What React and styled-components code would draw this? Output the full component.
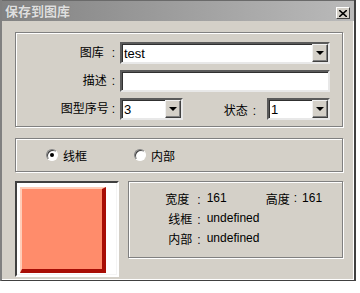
import React from "react"
import styled, { createGlobalStyle } from "styled-components"

const GlobalStyle = createGlobalStyle`
  body {
    margin: 0;
    background: #fff;
    font-family: "Liberation Sans", "Noto Sans CJK SC", sans-serif;
    font-size: 12px;
    color: #000;
  }
`

export default function App() {
  return (
    <>
      <GlobalStyle />
      <Window>
        <TitleBar>
          <Title>保存到图库</Title>
          <CloseButton>
            <svg width="8" height="7" viewBox="0 0 8 7">
              <path d="M0 0 L8 7 M8 0 L0 7" stroke="#000" strokeWidth="1.6" />
            </svg>
          </CloseButton>
        </TitleBar>
        <Content>
          <FormGroup>
            <Row>
              <Label>
                图库<Colon $gap={8}>:</Colon>
              </Label>
              <Select $width={210}>
                <Value $size={13}>test</Value>
                <DropButton>
                  <Arrow />
                </DropButton>
              </Select>
            </Row>
            <Row>
              <Label>
                描述<Colon $gap={5}>:</Colon>
              </Label>
              <Select $width={210} />
            </Row>
            <Row>
              <Label>
                图型序号<Colon $gap={3}>:</Colon>
              </Label>
              <Select $width={63}>
                <Value $size={13}>3</Value>
                <DropButton>
                  <Arrow />
                </DropButton>
              </Select>
              <SideLabel>
                状态<Colon $gap={5}>:</Colon>
              </SideLabel>
              <Select $width={63}>
                <Value $size={13}>1</Value>
                <DropButton>
                  <Arrow />
                </DropButton>
              </Select>
            </Row>
          </FormGroup>
          <RadioGroup>
            <RadioItem>
              <Radio $checked />
              线框
            </RadioItem>
            <RadioItem>
              <Radio />
              内部
            </RadioItem>
          </RadioGroup>
          <Bottom>
            <Preview>
              <Swatch />
            </Preview>
            <Info>
              <InfoRow>
                <InfoLabel>
                  宽度<Colon $gap={8} $after={6}>:</Colon>
                </InfoLabel>
                <InfoValue $width={59}>161</InfoValue>
                <span>高度</span>
                <Colon $gap={4} $after={5}>:</Colon>
                <InfoValue>161</InfoValue>
              </InfoRow>
              <InfoRow>
                <InfoLabel>
                  线框<Colon $gap={5} $after={6}>:</Colon>
                </InfoLabel>
                <InfoValue>undefined</InfoValue>
              </InfoRow>
              <InfoRow>
                <InfoLabel>
                  内部<Colon $gap={5} $after={6}>:</Colon>
                </InfoLabel>
                <InfoValue>undefined</InfoValue>
              </InfoRow>
            </Info>
          </Bottom>
        </Content>
      </Window>
    </>
  )
}

const Window = styled.div`
  width: 356px;
  height: 281px;
  box-sizing: border-box;
  background: #d4d0c8;
  border-left: 2px solid #808080;
  border-right: 2px solid #404040;
  border-bottom: 1px solid #404040;
  box-shadow: inset -1px -1px 0 #fff;
  display: flex;
  flex-direction: column;
`

const TitleBar = styled.div`
  height: 21px;
  box-sizing: border-box;
  padding: 6px 3px 0 3px;
  display: flex;
  justify-content: space-between;
  align-items: flex-start;
  background: linear-gradient(to right, #828282, #bababa);
  border-top: 1px solid #6a6a6a;
`

const Title = styled.div`
  font-size: 13px;
  font-weight: bold;
  line-height: 13px;
  margin-top: -2px;
  color: #dedede;
  text-shadow: 0 0 1px #6a6a6a;
`

const CloseButton = styled.div`
  width: 14px;
  height: 12px;
  margin-right: 1px;
  box-sizing: border-box;
  background: #d4d0c8;
  border: 1px solid;
  border-color: #fff #404040 #404040 #fff;
  display: flex;
  align-items: center;
  justify-content: center;
`

const Content = styled.div`
  padding: 11px 11px 0 13px;
  display: flex;
  flex-direction: column;
`

const Etched = styled.div`
  border: 1px solid #808080;
  box-shadow: inset 1px 1px 0 #fff, 1px 1px 0 #fff;
`

const FormGroup = styled(Etched)`
  padding: 9px 12px 6px 0;
  display: grid;
  row-gap: 6px;
`

const Row = styled.div`
  display: flex;
  align-items: center;
  height: 22px;
`

const Label = styled.div`
  width: 101px;
  margin-right: 3px;
  box-sizing: border-box;
  text-align: right;
  white-space: nowrap;
  line-height: 14px;
`

const Colon = styled.span`
  margin-left: ${p => (p.$gap ? p.$gap : 4)}px;
  margin-right: ${p => (p.$after ? p.$after : 2)}px;
`

const SideLabel = styled.div`
  margin-left: auto;
  margin-right: 9px;
  white-space: nowrap;
`

const Select = styled.div`
  width: ${p => p.$width}px;
  height: 22px;
  box-sizing: border-box;
  background: #fff;
  border: 2px solid;
  border-color: #5a5a5a #e8e8e8 #e8e8e8 #5a5a5a;
  box-shadow: inset 1px 1px 0 #303030;
  display: flex;
  align-items: center;
  padding-left: 2px;
`

const Value = styled.span`
  flex: 1;
  font-size: ${p => p.$size}px;
`

const DropButton = styled.div`
  width: 16px;
  height: 18px;
  box-sizing: border-box;
  background: #d4d0c8;
  border: 1px solid;
  border-color: #f0f0f0 #404040 #404040 #f0f0f0;
  box-shadow: inset -1px -1px 0 #808080;
  display: flex;
  align-items: center;
  justify-content: center;
`

const Arrow = styled.div`
  width: 0;
  height: 0;
  border-left: 4px solid transparent;
  border-right: 4px solid transparent;
  border-top: 4px solid #000;
`

const RadioGroup = styled(Etched)`
  margin-top: 11px;
  height: 34px;
  box-sizing: border-box;
  padding-left: 30px;
  display: flex;
  align-items: center;
  gap: 47px;
`

const RadioItem = styled.div`
  display: flex;
  align-items: center;
  gap: 5px;
`

const Radio = styled.div`
  width: 12px;
  height: 12px;
  box-sizing: border-box;
  border-radius: 50%;
  background: #fff;
  border: 1px solid;
  border-color: #808080 #fff #fff #808080;
  box-shadow: inset 1px 1px 0 #404040;
  display: flex;
  align-items: center;
  justify-content: center;

  &::after {
    content: "";
    width: 4px;
    height: 4px;
    border-radius: 50%;
    background: ${p => (p.$checked ? "#000" : "transparent")};
  }
`

const Bottom = styled.div`
  margin-top: 9px;
  display: flex;
  align-items: flex-start;
  gap: 9px;
`

const Preview = styled.div`
  width: 104px;
  height: 96px;
  box-sizing: border-box;
  background: #fff;
  border: 2px solid;
  border-color: #404040 #fff #fff #404040;
  box-shadow: inset -1px -1px 0 #f4f4f4;
  padding: 4px 0 0 3px;
`

const Swatch = styled.div`
  width: 86px;
  height: 86px;
  box-sizing: border-box;
  background: #ff8c6b;
  border: 2px solid;
  border-width: 2px 4px 4px 2px;
  border-color: #ffcdb8 #a80d05 #a80d05 #ffcdb8;
`

const Info = styled(Etched)`
  width: 216px;
  height: 77px;
  box-sizing: border-box;
  padding-top: 6px;
`

const InfoRow = styled.div`
  display: flex;
  align-items: center;
  height: 20px;
`

const InfoLabel = styled.div`
  width: 78px;
  text-align: right;
  white-space: nowrap;
`

const InfoValue = styled.span`
  width: ${p => (p.$width ? `${p.$width}px` : "auto")};
`
